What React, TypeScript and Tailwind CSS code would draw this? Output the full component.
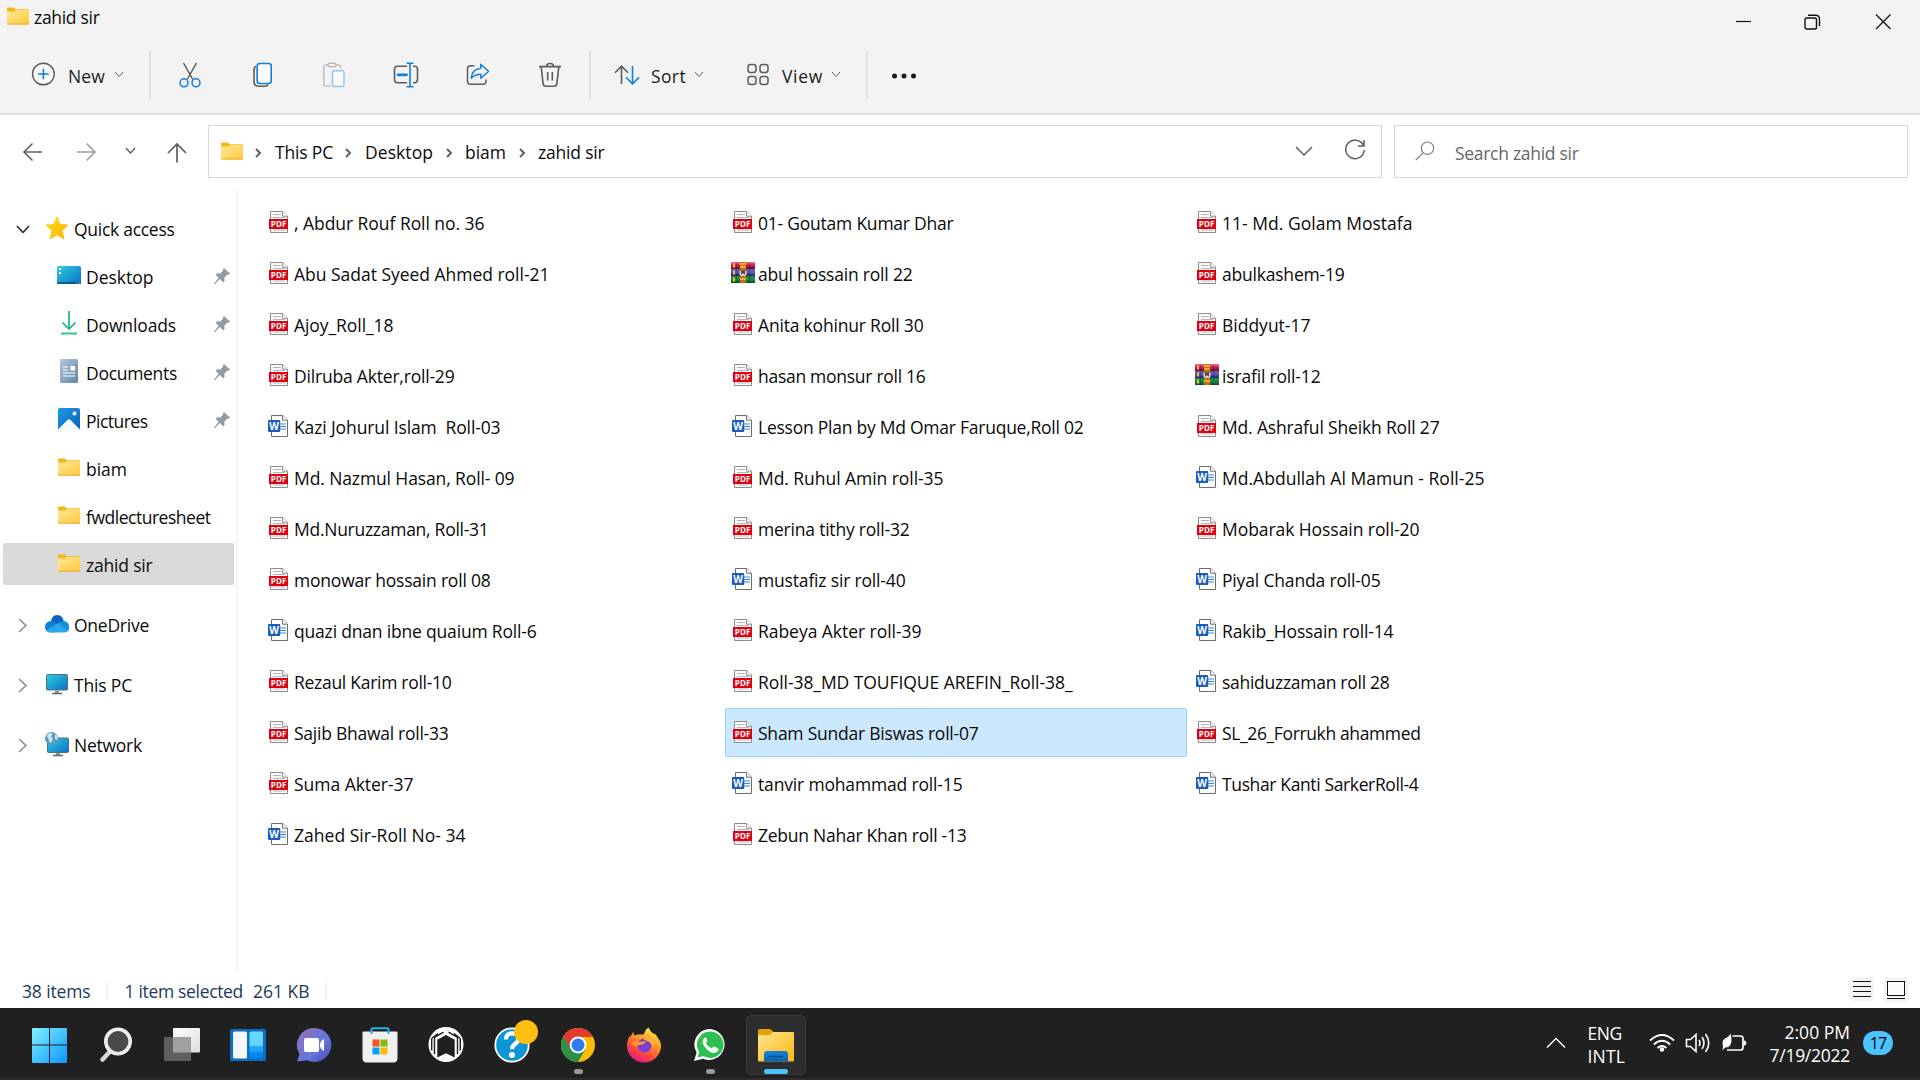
import { useLayoutEffect, useRef, useState } from "react";
import type { ReactNode } from "react";

/* Text run whose tracking is adjusted so that it spans `w` pixels. */
function T({ w, children, className = "" }: { w: number; children: string; className?: string }) {
  const ref = useRef<HTMLSpanElement>(null);
  const [spacing, setSpacing] = useState(0);
  useLayoutEffect(() => {
    const el = ref.current;
    if (!el) return;
    const natural = el.getBoundingClientRect().width - spacing * children.length;
    setSpacing((w + 1.5 - natural) / children.length);
  }, [w, children]);
  return (
    <span ref={ref} className={`inline-block shrink-0 whitespace-pre ${className}`} style={{ letterSpacing: `${spacing}px` }}>
      {children}
    </span>
  );
}

type Kind = "pdf" | "doc" | "rar";
type File = [Kind, string, number];

const columns: File[][] = [
  [
    ["pdf", ", Abdur Rouf Roll no. 36", 189],
    ["pdf", "Abu Sadat Syeed Ahmed roll-21", 254],
    ["pdf", "Ajoy_Roll_18", 98],
    ["pdf", "Dilruba Akter,roll-29", 159],
    ["doc", "Kazi Johurul Islam  Roll-03", 205],
    ["pdf", "Md. Nazmul Hasan, Roll- 09", 219],
    ["pdf", "Md.Nuruzzaman, Roll-31", 193],
    ["pdf", "monowar hossain roll 08", 195],
    ["doc", "quazi dnan ibne quaium Roll-6", 241],
    ["pdf", "Rezaul Karim roll-10", 156],
    ["pdf", "Sajib Bhawal roll-33", 153],
    ["pdf", "Suma Akter-37", 118],
    ["doc", "Zahed Sir-Roll No- 34", 170],
  ],
  [
    ["pdf", "01- Goutam Kumar Dhar", 194],
    ["rar", "abul hossain roll 22", 153],
    ["pdf", "Anita kohinur Roll 30", 164],
    ["pdf", "hasan monsur roll 16", 166],
    ["doc", "Lesson Plan by Md Omar Faruque,Roll 02", 324],
    ["pdf", "Md. Ruhul Amin roll-35", 184],
    ["pdf", "merina tithy roll-32", 150],
    ["doc", "mustafiz sir roll-40", 146],
    ["pdf", "Rabeya Akter roll-39", 162],
    ["pdf", "Roll-38_MD TOUFIQUE AREFIN_Roll-38_", 313],
    ["pdf", "Sham Sundar Biswas roll-07", 219],
    ["doc", "tanvir mohammad roll-15", 203],
    ["pdf", "Zebun Nahar Khan roll -13", 207],
  ],
  [
    ["pdf", "11- Md. Golam Mostafa", 189],
    ["pdf", "abulkashem-19", 121],
    ["pdf", "Biddyut-17", 87],
    ["rar", "israfil roll-12", 97],
    ["pdf", "Md. Ashraful Sheikh Roll 27", 216],
    ["doc", "Md.Abdullah Al Mamun - Roll-25", 261],
    ["pdf", "Mobarak Hossain roll-20", 196],
    ["doc", "Piyal Chanda roll-05", 157],
    ["doc", "Rakib_Hossain roll-14", 170],
    ["doc", "sahiduzzaman roll 28", 166],
    ["pdf", "SL_26_Forrukh ahammed", 197],
    ["doc", "Tushar Kanti SarkerRoll-4", 195],
  ],
];

const Folder = ({ className = "" }: { className?: string }) => (
  <svg width="22" height="18" viewBox="0 0 22 18" className={`shrink-0 ${className}`}>
    <defs>
      <linearGradient id="fold" x1="0" y1="0" x2="1" y2="1">
        <stop offset="0" stopColor="#ffe79b" />
        <stop offset="1" stopColor="#ffca3a" />
      </linearGradient>
    </defs>
    <path d="M0 1.2Q0 .5.8.5h5.7q.6 0 1 .5l1 1.300H21q1 0 1 1V6H0z" fill="#f9b61b" />
    <path d="M0 4.500h7.200L9 3h13v13.600q0 .9-.9.9H.9q-.9 0-.9-.9z" fill="url(#fold)" />
    <path d="M.2 17h21.600" stroke="#eda81c" strokeWidth="1" />
  </svg>
);

const Pdf = () => (
  <svg width="24" height="24" viewBox="0 0 24 24">
    <path d="M3.500 1.500h12.200l4.800 4.600v16.400h-17z" fill="#fbfbfb" stroke="#8c8c8c" />
    <path d="M15.600 1.600v4.600h4.800" fill="#fff" stroke="#8c8c8c" />
    <path d="M6 4.500h8M6 7.500h12M6 20h12" stroke="#b5b5b5" />
    <path d="M2 9h19v10H2z" fill="#e1000f" />
    <text x="11.600" y="17" textAnchor="middle" fontSize="8" fontWeight="700" fill="#fff" fontFamily="Open Sans, sans-serif" textLength="15.500" lengthAdjust="spacingAndGlyphs">PDF</text>
  </svg>
);

const Doc = () => (
  <svg width="24" height="24" viewBox="0 0 24 24">
    <path d="M4.500 1.500h11.300l4.700 4.600v16.400h-16z" fill="#fff" stroke="#6d6d6d" strokeLinejoin="round" />
    <path d="M15.600 1.600v4.600h4.800" fill="#fff" stroke="#6d6d6d" />
    <path d="M13 10h6M13 12.500h6M13 15h6" stroke="#2f86e0" strokeWidth="1.200" />
    <rect x="1" y="6" width="12.200" height="12" rx="1" fill="#1b5cbe" />
    <text x="7.100" y="15.500" textAnchor="middle" fontSize="10" fontWeight="700" fill="#fff" fontFamily="Open Sans, sans-serif">W</text>
  </svg>
);

const Rar = () => (
  <svg width="24" height="24" viewBox="0 0 24 24">
    <defs>
      <linearGradient id="r1" x1="0" y1="0" x2="0" y2="1"><stop offset="0" stopColor="#f07aa0" /><stop offset=".45" stopColor="#cf1f4c" /><stop offset="1" stopColor="#6e0c24" /></linearGradient>
      <linearGradient id="r2" x1="0" y1="0" x2="0" y2="1"><stop offset="0" stopColor="#5a63c4" /><stop offset=".5" stopColor="#5a58b8" /><stop offset="1" stopColor="#25235f" /></linearGradient>
      <linearGradient id="r3" x1="0" y1="0" x2="0" y2="1"><stop offset="0" stopColor="#1f8a4a" /><stop offset=".5" stopColor="#1a8a45" /><stop offset="1" stopColor="#0b4a22" /></linearGradient>
    </defs>
    <rect y="1" width="24" height="7" fill="url(#r1)" />
    <rect y="8" width="24" height="7" fill="url(#r2)" />
    <rect y="15" width="24" height="7" fill="url(#r3)" />
    <path d="M3 2.500v4M3 9.500v4M3 16.500v4" stroke="#ffb52a" strokeWidth="2" />
    <path d="M5.500 1v21M18.500 1v21" stroke="#000" strokeOpacity=".25" />
    <rect x="9" y="1" width="6" height="21" fill="#c96b17" />
    <path d="M9 3h6M9 6h6M9 18h6" stroke="#f5c63a" strokeWidth="1.500" />
    <rect x="8.500" y="9.500" width="7" height="5.500" rx="1.500" fill="#5e4636" />
    <path d="M9.200 10v2.500q0 1.800 1.400 1.800t1.400-1.800q0 1.800 1.400 1.800t1.400-1.800V10" stroke="#fff" strokeWidth="1.200" fill="none" />
  </svg>
);

const fileIcon: Record<Kind, ReactNode> = { pdf: <Pdf />, doc: <Doc />, rar: <Rar /> };

const Chev = ({ className = "", w = 9, h = 5, c = "#5f5f5f", s = 1 }: { className?: string; w?: number; h?: number; c?: string; s?: number }) => (
  <svg width={w + 2} height={h + 2} viewBox={`0 0 ${w + 2} ${h + 2}`} className={`shrink-0 ${className}`} fill="none" stroke={c} strokeWidth={s}>
    <path d={`M1 1L${1 + w / 2} ${1 + h}L${1 + w} 1`} />
  </svg>
);

const Right = ({ className = "", w = 4, h = 8, s = 2, c = "#606060" }: { className?: string; w?: number; h?: number; s?: number; c?: string }) => (
  <svg width={w + 3} height={h + 2} viewBox={`0 0 ${w + 3} ${h + 2}`} className={`shrink-0 ${className}`} fill="none" stroke={c} strokeWidth={s}>
    <path d={`M1 1L${1 + w} ${1 + h / 2}L1 ${1 + h}`} />
  </svg>
);

const Sep = ({ className = "" }: { className?: string }) => <div className={`h-12 w-[2px] shrink-0 bg-[#e2e2e2] ${className}`} />;

const G = "#5c5c5c";
const B = "#0f7fd8";

function TitleBar() {
  return (
    <header className="flex h-9 items-start justify-between">
      <div className="flex pt-[6px] pl-[7px]">
        <Folder className="mt-px" />
        <T w={64} className="-mt-px ml-[5px] leading-[25px]">zahid sir</T>
      </div>
      <div className="flex pt-3.5 pr-7">
        <svg width="18" height="16" viewBox="0 0 18 16" className="mr-[51px]"><path d="M1 7.500h15" stroke="#111" strokeWidth="1.200" /></svg>
        <svg width="17" height="16" viewBox="0 0 17 16" fill="none" stroke="#111" strokeWidth="1.400" className="mr-[54px]">
          <rect x="1" y="4" width="11.500" height="11" rx="1.800" />
          <path d="M4 1.200h7.500q4 0 4 4V12" />
        </svg>
        <svg width="17" height="16" viewBox="0 0 17 16" stroke="#111" strokeWidth="1.300"><path d="M1 .5l14.500 14.500M15.500.5L1 15" /></svg>
      </div>
    </header>
  );
}

function Toolbar() {
  return (
    <div className="flex h-[77px] items-center text-[#1b1b1b]">
      <svg width="24" height="24" viewBox="0 0 24 24" fill="none" className="-mt-px ml-[31px]">
        <circle cx="12.400" cy="12" r="10.800" stroke={G} strokeWidth="1.400" fill="#f9f9f9" />
        <path d="M12.400 6.700v10.600M7.100 12h10.600" stroke={B} strokeWidth="1.600" />
      </svg>
      <T w={35.500} className="ml-[13px] mt-[2px]">New</T>
      <Chev className="ml-[9px]" w={8} h={4.500} />
      <Sep className="ml-[25px]" />
      <svg width="24" height="26" viewBox="0 0 24 26" fill="none" strokeWidth="1.500" className="ml-[27px]">
        <path d="M5.500 1l9.300 16.500M18.500 1L9.200 17.500" stroke={G} />
        <circle cx="6" cy="20.800" r="4" stroke={B} />
        <circle cx="18" cy="20.800" r="4" stroke={B} />
      </svg>
      <svg width="22" height="26" viewBox="0 0 22 26" fill="none" strokeWidth="1.600" className="ml-[50px]">
        <path d="M4 4.500Q2 5 2 8v11.500Q2 24.200 7 24.200h6q2 0 3-1.700" stroke={G} />
        <rect x="5.200" y="1.500" width="14" height="20" rx="2.500" stroke={B} fill="#fbfbfb" />
      </svg>
      <svg width="24" height="26" viewBox="0 0 24 26" fill="none" strokeWidth="1.500" className="ml-[48px]">
        <path d="M6 3H4Q1.800 3 1.800 5v17Q1.800 24 4 24h4.500M14 3h2.500q2 0 2 2v1.500" stroke="#c0c0c0" />
        <rect x="6" y="1.200" width="8" height="3.500" rx="1.700" stroke="#b8b8b8" />
        <rect x="10.500" y="8.800" width="11.500" height="15.600" rx="1.800" stroke="#92c6ee" fill="#f9fbfd" />
      </svg>
      <svg width="26" height="26" viewBox="0 0 26 26" fill="none" strokeWidth="1.600" className="ml-[47px]">
        <path d="M14 4.300H4.500Q1.500 4.300 1.500 7.500v10q0 3.300 3 3.300H14M20 4.300h1.500q3 0 3 3.200v10q0 3.300-3 3.300H20" stroke={G} />
        <path d="M17 1.500v23M13.500 1.200h7M13.500 24.700h7" stroke={B} />
        <path d="M5 12.800h8.500" stroke={B} strokeWidth="2.800" strokeLinecap="round" />
      </svg>
      <svg width="24" height="26" viewBox="0 0 24 26" fill="none" strokeWidth="1.500" strokeLinejoin="round" className="ml-[47px]">
        <path d="M8.500 3.800H4.500q-3 0-3 3v12.500q0 3 3 3H17q3 0 3-3V17.500" stroke={G} />
        <path d="M14.800 2.200l7.700 7-7.700 7v-4q-6 0-9.500 4Q6 7.500 14.800 6.300z" stroke={B} fill="#f8fbfe" />
      </svg>
      <svg width="24" height="26" viewBox="0 0 24 26" fill="none" stroke={G} strokeWidth="1.600" className="ml-[48px]">
        <path d="M1 4.600h22M3.200 4.600l1.900 17q.3 2.600 2.700 2.600h8.400q2.400 0 2.700-2.600l1.900-17M8.500 4.300Q8.500 1.500 12 1.500t3.500 2.800M9.700 10v8.500M14.300 10v8.500" />
      </svg>
      <Sep className="ml-[27px]" />
      <svg width="26" height="22" viewBox="0 0 26 22" fill="none" strokeWidth="1.600" className="ml-[23px]">
        <path d="M7.500 20V2.500M1 8.700l6.500-6.500L14 8.700" stroke={G} />
        <path d="M18.500 2v17.500M12 13.300l6.500 6.500 6.500-6.500" stroke={B} />
      </svg>
      <T w={33.500} className="ml-[11px] mt-[2px]">Sort</T>
      <Chev className="ml-[8px]" w={8} h={4.500} />
      <svg width="24" height="24" viewBox="0 0 24 24" fill="none" stroke={G} strokeWidth="1.500" className="ml-[42px]">
        <rect x="2" y="1.500" width="8" height="8" rx="2.500" /><rect x="14" y="1.500" width="8" height="8" rx="2.500" />
        <rect x="2" y="13.500" width="8" height="8" rx="2.500" /><rect x="14" y="13.500" width="8" height="8" rx="2.500" />
      </svg>
      <T w={39.500} className="ml-[12px] mt-[2px]">View</T>
      <Chev className="ml-[8px]" w={8} h={4.500} />
      <Sep className="ml-[25px]" />
      <svg width="28" height="8" viewBox="0 0 28 8" fill="#1b1b1b" className="ml-[22px] mt-[2px]">
        <circle cx="4.500" cy="4" r="2.500" /><circle cx="14" cy="4" r="2.500" /><circle cx="23.500" cy="4" r="2.500" />
      </svg>
    </div>
  );
}

function NavBar() {
  return (
    <div className="flex h-[75px] items-start pt-[10px]">
      <div className="flex h-[53px] w-[208px] shrink-0 items-center">
        <svg width="22" height="20" viewBox="0 0 22 20" fill="none" stroke="#5f5f5f" strokeWidth="1.600" className="ml-[22px]"><path d="M20 10H2M10.500 1.500L2 10l8.500 8.500" /></svg>
        <svg width="22" height="20" viewBox="0 0 22 20" fill="none" stroke="#9d9d9d" strokeWidth="1.600" className="ml-[31px]"><path d="M2 10h18M11.500 1.500L20 10l-8.500 8.500" /></svg>
        <Chev className="-mt-[2px] ml-[28px]" w={9} h={5} s={1.400} />
        <svg width="22" height="22" viewBox="0 0 22 22" fill="none" stroke="#5f5f5f" strokeWidth="1.700" className="ml-[30px] mt-[2px]"><path d="M11 20.500V2.500M2 11l9-9 9 9" /></svg>
      </div>
      <div className="flex h-[53px] w-[1174px] shrink-0 items-center border border-[#d9d9d9]">
        <Folder className="ml-[12px] -mt-[2px]" />
        <Right className="ml-[12px] mt-[2px]" />
        <T w={56.500} className="ml-[13px]">This PC</T>
        <Right className="ml-[12px] mt-[2px]" />
        <T w={66.500} className="ml-[13px]">Desktop</T>
        <Right className="ml-[13px] mt-[2px]" />
        <T w={39.500} className="ml-[12px]">biam</T>
        <Right className="ml-[13px] mt-[2px]" />
        <T w={65} className="ml-[12px]">zahid sir</T>
        <Chev className="-mt-[2px] ml-auto" w={16} h={8} s={1.500} />
        <svg width="24" height="24" viewBox="0 0 24 24" fill="none" stroke="#5f5f5f" strokeWidth="1.500" className="mr-[14px] ml-[30px] -mt-[3px]">
          <path d="M20.500 7.500A9.300 9.300 0 1 0 21.300 12M21 2v6h-6" />
        </svg>
      </div>
      <div className="ml-[12px] flex h-[53px] w-[514px] shrink-0 items-center border border-[#d9d9d9] text-[#666]">
        <svg width="20" height="20" viewBox="0 0 20 20" fill="none" stroke="#808080" strokeWidth="1.200" className="-mt-px ml-[20px]">
          <circle cx="12.500" cy="7.200" r="6.200" /><path d="M8 11.800L.8 19" />
        </svg>
        <T w={122} className="ml-[20px] mt-[2px]">Search zahid sir</T>
      </div>
    </div>
  );
}

const StarIcon = () => (
  <svg width="24" height="24" viewBox="0 0 24 24">
    <defs><linearGradient id="st" x1="0" y1="0" x2="1" y2="1"><stop offset="0" stopColor="#ffdc1e" /><stop offset="1" stopColor="#fbb300" /></linearGradient></defs>
    <path d="M12 1l3.200 7.600 7.800.5-6 5.300 2 8.600-7-4.300L5 23l2-8.600-6-5.300 7.800-.5z" fill="url(#st)" stroke="url(#st)" strokeLinejoin="round" />
  </svg>
);
const DesktopIcon = () => (
  <svg width="24" height="20" viewBox="0 0 24 20">
    <defs><linearGradient id="dk" x1="0" y1="0" x2="1" y2="1"><stop offset="0" stopColor="#2ccfe2" /><stop offset="1" stopColor="#0b6fc4" /></linearGradient></defs>
    <rect y="1" width="24" height="18" rx="1.500" fill="url(#dk)" />
    <path d="M0 18h24" stroke="#0d4a80" strokeWidth="1.500" />
    <path d="M2 4h2M2 8h2" stroke="#fff" strokeWidth="2" />
    <path d="M19.500 18h1M22 18h1" stroke="#cfe6f8" />
  </svg>
);
const DownIcon = () => (
  <svg width="24" height="24" viewBox="0 0 24 24" fill="none" stroke="#19b39a" strokeWidth="1.700">
    <path d="M12 0v18M5.500 11.500L12 18l6.500-6.500" /><path d="M4 22.500h16" stroke="#2cc48a" strokeWidth="2" />
  </svg>
);
const DocumentsIcon = () => (
  <svg width="24" height="24" viewBox="0 0 24 24">
    <defs><linearGradient id="dc" x1="0" y1="0" x2="1" y2="1"><stop offset="0" stopColor="#b3c6db" /><stop offset="1" stopColor="#6684a8" /></linearGradient></defs>
    <rect x="3" y="0" width="18" height="24" rx="1.500" fill="url(#dc)" />
    <path d="M6 8h5M6 11h5M6 14h12M6 17h12" stroke="#fff" strokeWidth="1.200" /><rect x="13.500" y="7" width="4.500" height="4.500" fill="#fff" />
  </svg>
);
const PicturesIcon = () => (
  <svg width="24" height="24" viewBox="0 0 24 24">
    <defs><linearGradient id="pc" x1="0" y1="0" x2="1" y2="1"><stop offset="0" stopColor="#1d9be6" /><stop offset="1" stopColor="#0862b4" /></linearGradient></defs>
    <rect x="1" y="1" width="22" height="22" rx="2" fill="url(#pc)" />
    <path d="M1.500 22l9-9q1.500-1.300 3 0l9 9q-.5 1-1.500 1H3q-1 0-1.500-1z" fill="#f5fafe" />
    <circle cx="17.500" cy="6.500" r="2" fill="#fff" />
  </svg>
);
const CloudIcon = () => (
  <svg width="24" height="18" viewBox="0 0 24 18">
    <path d="M6 9Q5.500 0 12.500 0q5 0 6.300 6.500L12 12z" fill="#0c63b8" />
    <path d="M5.500 17.500Q0 17 0 12t5.500-6q2.500-.5 5.500 1.800l8 6.200-6 3z" fill="#0f7fd8" />
    <path d="M17.500 6.300Q24 6 24 12q0 5.500-5 5.500H6q-3 0-4.500-2.500L13 8.300q2-1.700 4.500-2z" fill="#28a8ea" />
    <path d="M17.500 6.300Q24 6 24 12q0 2-1.200 3.400L13 8.300q2-1.700 4.500-2z" fill="#1590df" />
  </svg>
);
const PcIcon = () => (
  <svg width="24" height="22" viewBox="0 0 24 22">
    <rect x="1.500" y="1.500" width="21" height="15.500" rx="1" fill="url(#dk)" stroke="#5c6b75" />
    <path d="M10 17.500h4v2.500h-4z" fill="#8a959c" /><path d="M7 20.500h10" stroke="#59656d" strokeWidth="1.500" />
  </svg>
);
const NetIcon = () => (
  <svg width="24" height="26" viewBox="0 0 24 26">
    <rect x="2.500" y="7" width="21" height="14.500" rx="1" fill="url(#dk)" stroke="#5c6b75" />
    <path d="M11 22h4v2h-4z" fill="#8a959c" /><path d="M8 24.500h10" stroke="#59656d" strokeWidth="1.500" />
    <circle cx="6.500" cy="7.500" r="6.500" fill="#5b9cc6" />
    <path d="M1.500 5Q4 1 7.500 2.500L6 6l2 2-2.500 4Q3 10 3.500 7.500zM10 3q3 2 2.500 6L10 8z" fill="#cfe5f3" />
  </svg>
);
const Pin = () => (
  <svg width="18" height="18" viewBox="0 0 18 18" className="mr-[3px] ml-auto" fill="#929ba3">
    <path d="M11 1l6 5.600-1.200 1.200-1.400-.2-3 3.200.2 3-1.500 1.500-3.300-3.200L2 17l-1 .2.200-1L5.500 11 2.700 7.800 4.200 6.300l3 .2 3-3L9.900 2z" />
  </svg>
);

type NavItem = { label: string; w: number; icon: ReactNode; pin?: boolean; active?: boolean };
const quick: NavItem[] = [
  { label: "Desktop", w: 66, icon: <DesktopIcon />, pin: true },
  { label: "Downloads", w: 88.5, icon: <DownIcon />, pin: true },
  { label: "Documents", w: 89.5, icon: <DocumentsIcon />, pin: true },
  { label: "Pictures", w: 60, icon: <PicturesIcon />, pin: true },
  { label: "biam", w: 39.5, icon: <Folder /> },
  { label: "fwdlecturesheet", w: 123, icon: <Folder /> },
  { label: "zahid sir", w: 65, icon: <Folder />, active: true },
];
const roots: NavItem[] = [
  { label: "OneDrive", w: 73.5, icon: <CloudIcon /> },
  { label: "This PC", w: 56.5, icon: <PcIcon /> },
  { label: "Network", w: 66.5, icon: <NetIcon /> },
];

function Sidebar() {
  return (
    <nav className="flex h-[783px] w-[238px] shrink-0 flex-col border-r-2 border-[#f5f5f5] pt-[17px] pl-[3px]">
      <div className="flex h-[42px] items-center">
        <Chev className="mt-[2px] ml-[13px]" w={12} h={6.500} s={1.700} c="#333" />
        <div className="ml-[15px] flex w-6 justify-center"><StarIcon /></div>
        <T w={99} className="mt-px ml-[5px]">Quick access</T>
      </div>
      <div className="mt-1.5 flex flex-col gap-1.5">
        {quick.map((q) => (
          <div key={q.label} className={`flex h-[42px] w-[231px] items-center rounded-[2px] pl-[54px] ${q.active ? "bg-[#d9d9d9]" : ""}`}>
            <div className="-mt-[2px] flex w-6 shrink-0 justify-center">{q.icon}</div>
            <T w={q.w} className="mt-px ml-[5px]">{q.label}</T>
            {q.pin && <Pin />}
          </div>
        ))}
      </div>
      <div className="mt-[18px] flex flex-col gap-[18px]">
        {roots.map((r) => (
          <div key={r.label} className="flex h-[42px] items-center">
            <Right className="ml-[15px] mt-[3px]" w={7} h={13} s={1.500} c="#8a8a8a" />
            <div className="ml-[17px] flex w-6 shrink-0 justify-center">{r.icon}</div>
            <T w={r.w} className="mt-px ml-[5px]">{r.label}</T>
          </div>
        ))}
      </div>
    </nav>
  );
}

function FileList() {
  return (
    <main className="flex flex-1 gap-[2px] pt-[8px] pl-[23px]">
      {columns.map((col, i) => (
        <div key={i} className="flex w-[462px] flex-col gap-[2px]">
          {col.map(([kind, name, w]) => (
            <div
              key={name}
              className={`flex h-[49px] items-center rounded-[2px] border pl-[5px] ${name.startsWith("Sham") ? "border-[#99d1ff] bg-[#cce8ff]" : "border-transparent"}`}
            >
              <div className="-mt-[2px] shrink-0">{fileIcon[kind]}</div>
              <T w={w} className="ml-[3px] mt-px">{name}</T>
            </div>
          ))}
        </div>
      ))}
    </main>
  );
}

function StatusBar() {
  return (
    <footer className="flex h-[35px] items-start text-[#1e395b]">
      <T w={67} className="mt-[7px] ml-[22px]">38 items</T>
      <div className="mt-[9px] ml-[15px] h-[17px] w-[2px] bg-[#f2f2f2]" />
      <T w={117} className="mt-[7px] ml-[17px]">1 item selected</T>
      <T w={55} className="mt-[7px] ml-[10px]">261 KB</T>
      <div className="mt-[9px] ml-[15px] h-[17px] w-[2px] bg-[#f2f2f2]" />
      <svg width="24" height="24" viewBox="0 0 24 24" className="mt-[4px] mr-[10px] ml-auto" stroke="#111">
        <rect width="24" height="24" rx="2" fill="#f4f4f4" stroke="none" />
        <path d="M3 4.500h18M3 9.500h18M3 14.500h18M3 19.500h18" />
      </svg>
      <svg width="24" height="24" viewBox="0 0 24 24" className="mt-[5px] mr-[12px]" stroke="#111" fill="none">
        <rect width="24" height="24" rx="2" fill="#f4f4f4" stroke="none" />
        <rect x="3.500" y="3.500" width="17" height="14" fill="#fbfbfb" /><path d="M3 20.500h18" />
      </svg>
    </footer>
  );
}

const apps: { name: string; icon: ReactNode; running?: boolean; active?: boolean }[] = [
  {
    name: "start",
    icon: (
      <svg width="36" height="36" viewBox="0 0 36 36" className="-ml-px">
        <defs><linearGradient id="ws" gradientUnits="userSpaceOnUse" x1="0" y1="0" x2="36" y2="36"><stop offset="0" stopColor="#82f4ff" /><stop offset="1" stopColor="#0a94ff" /></linearGradient></defs>
        <path d="M0 2q0-1 1-1h16v16.500H0zM18 1h16q1 0 1 1v15.500H18zM0 18.500h17V36H1q-1 0-1-1zM18 18.500h17V35q0 1-1 1H18z" fill="url(#ws)" />
      </svg>
    ),
  },
  {
    name: "search",
    icon: (
      <svg width="36" height="36" viewBox="0 0 36 36" fill="none">
        <path d="M12 24.500L4.500 32.500" stroke="#d5d8da" strokeWidth="4.500" strokeLinecap="round" />
        <circle cx="20" cy="14.500" r="12.200" stroke="#eceeef" strokeWidth="3.600" fill="#4a4a4a" />
      </svg>
    ),
  },
  {
    name: "tasks",
    icon: (
      <svg width="36" height="36" viewBox="0 0 36 36">
        <defs><linearGradient id="tv" x1="0" y1="0" x2="1" y2="1"><stop offset="0" stopColor="#fff" /><stop offset="1" stopColor="#ddd" /></linearGradient></defs>
        <rect x="9" y="1" width="27" height="24.500" rx="1" fill="url(#tv)" />
        <rect x="0" y="10" width="27" height="24" rx="1" fill="#5e5e5e" />
        <path d="M9 10h18v15.500H9z" fill="#a0a0a0" />
      </svg>
    ),
  },
  {
    name: "widgets",
    icon: (
      <svg width="36" height="36" viewBox="0 0 36 36">
        <rect y="2" width="36" height="32" rx="1.500" fill="#0b6cc0" />
        <rect x="3" y="4.500" width="14" height="27" rx="1.500" fill="#f5f5f5" />
        <rect x="19.500" y="4.500" width="13.500" height="27" rx="1.500" fill="#0586ee" />
        <path d="M19.500 6q0-1.500 1.500-1.500h10.500q1.500 0 1.500 1.500v13.500H19.500z" fill="#66d8ff" /><path d="M19.500 19.500H33v5.700H19.500z" fill="#1fa4fb" />
      </svg>
    ),
  },
  {
    name: "chat",
    icon: (
      <svg width="36" height="36" viewBox="0 0 36 36" className="-ml-px">
        <defs><linearGradient id="ch" x1="0" y1="0" x2="1" y2="1"><stop offset="0" stopColor="#9a6bb5" /><stop offset=".35" stopColor="#7377cf" /><stop offset=".6" stopColor="#6478dd" /><stop offset="1" stopColor="#4b3fb0" /></linearGradient></defs>
        <path d="M18 1a17 17 0 1 1-7 32.300L1 34.500 3.500 27A17 17 0 0 1 18 1z" fill="url(#ch)" />
        <rect x="8" y="11" width="15" height="14" rx="2" fill="#fff" /><path d="M28 12v12q-4-2-4-6t4-6z" fill="#fff" />
      </svg>
    ),
  },
  {
    name: "store",
    icon: (
      <svg width="36" height="36" viewBox="0 0 36 36" className="-ml-px">
        <path d="M.5 5.500q0-1 1-1h33q1 0 1 1V31q0 4.500-4.500 4.500H5Q.5 35.500.5 31z" fill="#f1f1f1" />
        <path d="M9.500 7V2.500q0-1.200 1.200-1.200h14.600q1.200 0 1.200 1.200V7" fill="none" stroke="#1cb4e8" strokeWidth="2" />
        <path d="M10.500 12.500h7v7h-7z" fill="#f35325" /><path d="M18.500 12.500h7v7h-7z" fill="#81bc06" />
        <path d="M10.500 20.500h7v7h-7z" fill="#05a6f0" /><path d="M18.500 20.500h7v7h-7z" fill="#ffba08" />
      </svg>
    ),
  },
  {
    name: "reader",
    icon: (
      <svg width="36" height="36" viewBox="0 0 36 36" fill="none" className="-ml-px">
        <circle cx="18" cy="17.500" r="17.500" fill="#fff" />
        <path d="M18 8l8.700 4.800v17.700L18 26.300l-8.700 4.200V12.800z" fill="#202020" />
        <path d="M15.500 5.200L7.300 9.800q-.8.600-.8 1.500v16M20.500 5.200l8.200 4.600q.8.600.8 1.500v16M10 6.500L4.500 10.800q-.8.600-.8 1.600v11M26 6.500l5.500 4.300q.8.600.8 1.600v11" stroke="#202020" strokeWidth="1.400" />
      </svg>
    ),
  },
  {
    name: "help",
    icon: (
      <div className="relative">
        <svg width="36" height="36" viewBox="0 0 36 36">
          <circle cx="18" cy="18" r="16.700" fill="#0b96d8" stroke="#fff" strokeWidth="1.800" />
          <path d="M12 12.500Q11.800 6.500 18 6.300t6.300 5.200q.2 3-3 5.300-3.300 2.200-3.300 5.400" stroke="#fff" strokeWidth="4.200" fill="none" />
          <circle cx="18" cy="28" r="3" fill="#fff" />
        </svg>
        <div className="absolute -top-[7px] left-[20px] size-6 rounded-full bg-[#ffbf10]" />
      </div>
    ),
  },
  {
    name: "chrome",
    running: true,
    icon: (
      <svg width="36" height="36" viewBox="0 0 36 36">
        <circle cx="18" cy="18" r="17" fill="#fbbc05" />
        <path d="M18 18L3.300 9.500A17 17 0 0 0 18 35l7.400-12.800z" fill="#2d9147" />
        <path d="M18 10h14.900A17 17 0 0 0 3.300 9.500L11 22z" fill="#e33b2e" />
        <circle cx="18" cy="18" r="8.400" fill="#fff" /><circle cx="18" cy="18" r="6.500" fill="#2f7bf0" />
      </svg>
    ),
  },
  {
    name: "firefox",
    icon: (
      <svg width="36" height="36" viewBox="0 0 36 36">
        <defs>
          <linearGradient id="ff" x1=".8" y1="0" x2=".3" y2="1"><stop offset="0" stopColor="#fff44f" /><stop offset=".35" stopColor="#ffa52a" /><stop offset=".7" stopColor="#ff4a3c" /><stop offset="1" stopColor="#e31587" /></linearGradient>
        </defs>
        <path d="M22.500.500q1 3 4.500 6 3 0 4.500 4 3.500 4 3.500 8.500a17 16.500 0 0 1-34 0q0-6 3-10.500l.5 2Q5 7.500 7.500 5l.5 3.500q2.500-1.300 6.500-1 3 .3 3.500-.5 1-4.500 4.500-6.500z" fill="url(#ff)" />
        <circle cx="18.500" cy="18.500" r="7" fill="#7a3fd0" />
        <path d="M5 17q2-3 6-2.500t9-.500q-1 3.500-6 3.800-2.500.2-3 2z" fill="#ff9a2a" />
        <path d="M17 12q6-2 10 3 1 2 0 5-2-5-6-6z" fill="#ffb52e" />
      </svg>
    ),
  },
  {
    name: "whatsapp",
    running: true,
    icon: (
      <svg width="36" height="36" viewBox="0 0 36 36">
        <path d="M18.500 2A15.500 15.500 0 1 1 11 31.700L2 34l2.600-8.600A15.500 15.500 0 0 1 18.500 2z" fill="#fff" />
        <path d="M18.500 4.500a13.200 13.200 0 1 1-7 24.500L5.500 30.500 7.200 25A13.200 13.200 0 0 1 18.500 4.500z" fill="#2cc052" />
        <path d="M13 10.500q-3.500 2-2 6.500 3 6.500 9 8.700 5 1.300 6.500-3.200l-.5-1.300-4.300-2-1.900 2.200q-4-1.500-6-5.500l1.700-1.900-1.600-3.800z" fill="#fff" />
      </svg>
    ),
  },
  {
    name: "explorer",
    active: true,
    icon: (
      <svg width="36" height="36" viewBox="0 0 36 36">
        <defs>
          <linearGradient id="ex" x1="0" y1="0" x2="1" y2="1"><stop offset="0" stopColor="#ffe391" /><stop offset="1" stopColor="#fbb90f" /></linearGradient>
          <linearGradient id="eb" x1="0" y1="0" x2="0" y2="1"><stop offset="0" stopColor="#1583dc" /><stop offset="1" stopColor="#0c60ae" /></linearGradient>
        </defs>
        <path d="M0 3.500Q0 2 1.500 2H11q1.500 0 2.500 1l2.500 2.500V12H0z" fill="#e3a008" />
        <path d="M0 8h11.500l4-3H35q1 0 1 1v27.500q0 1-1 1H1q-1 0-1-1z" fill="url(#ex)" />
        <path d="M6 34.500V27q0-3 3-3h18q3 0 3 3v7.500z" fill="url(#eb)" /><path d="M11 29.500h14" stroke="#0a4b8e" strokeWidth="1.200" />
      </svg>
    ),
  },
];

function Taskbar() {
  return (
    <div className="flex h-[72px] items-start border-b-2 border-[#2c2c2c] bg-[#202020] text-white">
      <div className="flex gap-[6px] pt-[7px] pl-[20px]">
        {apps.map((a) => (
          <div
            key={a.name}
            className={`flex h-[60px] w-[60px] flex-col items-center rounded-[5px] border pt-[11px] ${a.active ? "border-[#383838] bg-[#2d2d2d]" : "border-transparent"}`}
          >
            {a.icon}
            {a.running && <div className="mt-[6px] h-[5px] w-[9px] rounded-full bg-[#9a9a9a]" />}
            {a.active && <div className="mt-[6px] h-[5px] w-6 rounded-full bg-[#4cc2ff]" />}
          </div>
        ))}
      </div>
      <div className="mr-[27px] ml-auto flex h-[70px] items-center">
        <svg width="20" height="12" viewBox="0 0 20 12" fill="none" stroke="#fff" strokeWidth="1.400"><path d="M1 10.500L10 1.500l9 9" /></svg>
        <div className="mt-[3px] ml-[22px] flex flex-col leading-[23px]">
          <T w={34}>ENG</T>
          <T w={36}>INTL</T>
        </div>
        <svg width="26" height="20" viewBox="0 0 26 20" fill="none" stroke="#fff" strokeWidth="1.700" className="ml-[24px]">
          <path d="M1 7.500Q13-3.500 25 7.500M4.800 11.500q8.200-7.500 16.400 0M8.500 15q4.500-4 9 0" /><circle cx="13" cy="16.500" r="2.200" fill="#fff" stroke="none" />
        </svg>
        <svg width="26" height="22" viewBox="0 0 26 22" fill="none" stroke="#fff" strokeWidth="1.600" className="ml-[10px]">
          <path d="M1.500 7.500h4l5.500-5v17l-5.500-5h-4zM14 8q2 3 0 6M17 5q4 6 0 12M20.500 2q6.500 9 0 18" />
        </svg>
        <svg width="26" height="20" viewBox="0 0 26 20" fill="none" className="ml-[10px]">
          <path d="M11.500 3h8q2.500 0 2.500 2.500v9q0 2.500-2.500 2.500H6" stroke="#fff" strokeWidth="1.700" />
          <path d="M22.500 7.500h1q1.800 0 1.800 2.500t-1.800 2.500h-1z" fill="#fff" />
          <path d="M9.500.5Q11.800 8 9 12.500q-2 2.500-5 2L1.500 17.500l.5-4Q0 6 6 4.500 8.500 3 9.500.5z" fill="#fff" />
        </svg>
        <div className="mt-[2px] ml-[19px] flex w-[84px] flex-col items-end leading-[23px]">
          <T w={64} className="-mt-px">2:00 PM</T>
          <T w={79}>7/19/2022</T>
        </div>
        <div className="ml-[13px] flex h-6 w-[30px] items-center justify-center rounded-full bg-[#4cc2ff] text-[16px] text-black">
          <T w={15}>17</T>
        </div>
      </div>
    </div>
  );
}

export default function App() {
  return (
    <div className="flex h-[1080px] w-[1920px] flex-col overflow-hidden bg-white font-['Open_Sans',sans-serif] text-[17.5px] leading-[22px] text-[#0a0a0a]">
      <div className="h-[115px] border-b-2 border-[#dfdfdf] bg-[#f3f3f3]">
        <TitleBar />
        <Toolbar />
      </div>
      <NavBar />
      <div className="flex h-[783px]">
        <Sidebar />
        <FileList />
      </div>
      <StatusBar />
      <Taskbar />
    </div>
  );
}
